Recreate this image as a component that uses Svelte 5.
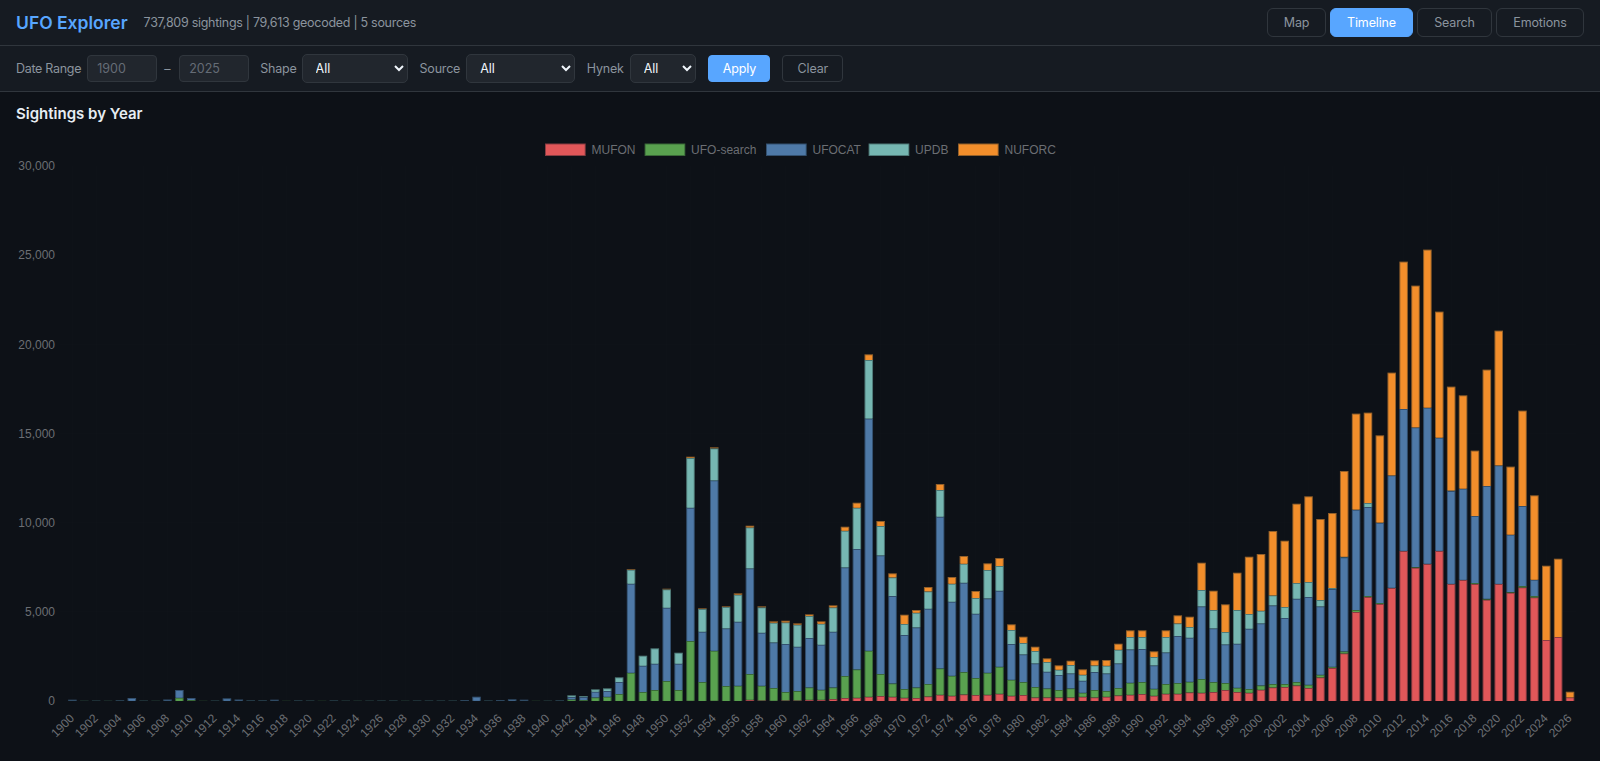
<script>
  const colors = ['#e15759', '#59a14f', '#4e79a7', '#76b7b2', '#f28e2b'];
  const edges = ['#8a3d42', '#3a6a38', '#33506f', '#4f7a78', '#93602a'];
  const names = ['MUFON', 'UFO-search', 'UFOCAT', 'UPDB', 'NUFORC'];
  const legendX = [545, 644.6, 766, 868.6, 958];

  const baseline = 701;
  const unit = 89.17;
  const firstX = 72.4;
  const step = 11.886;
  const barW = 8.56;

  // Cumulative stack tops per year, in chart pixels above the baseline: MUFON, UFO-search, UFOCAT, UPDB, NUFORC
  const s = (h) => [0, 0.2, h, h, h];
  const early = [1.3, 0.3, 0.5, 0.3, 0.8, 3, 0.5, 0.3, 1.5].map(s);
  const rows = [
    ...early,
    [0, 3.3, 11, 11, 11], [0, 1, 3, 3, 3],
    ...[0.1, 0.5, 2.7, 1.5, 0.7, 0.7, 1.3, 0.2, 0.6, 0.5, 0.2, 0.6, 0.4, 0.3, 0.4, 0.5, 0.5, 0.3, 0.5, 0.5, 0.5, 0.5, 1, 4.3, 0.6, 1, 1.7, 1.3, 0.2, 0.4, 0.7].map(s),
    [0, 1.7, 4, 5.7, 5.7], [0, 1, 4, 5, 5], [0, 3.7, 9.3, 11.7, 11.7], [0, 4.3, 10, 12.7, 12.7],
    [0, 7, 19, 23.7, 23.7], [0, 28.3, 117.3, 131.3, 132], [0, 9, 35.3, 45.3, 45.3], [0, 11, 37.3, 52.7, 52.7],
    [0, 20, 93.3, 111.7, 112.3], [0, 11, 37.3, 48.3, 48.3], [0.3, 60, 193.3, 243, 244.3], [0, 19, 69.3, 92, 92.7],
    [0.3, 50.3, 220.7, 252.7, 253.7], [0, 15, 72.7, 94, 94.7], [0, 15.3, 79.3, 106.3, 107.7], [1.3, 27, 132.7, 173.7, 175.3],
    [0.7, 15.3, 68.3, 93.7, 94.7], [0.3, 13, 58.7, 78.3, 79.7], [0.7, 9, 57, 78.7, 80.3], [0.7, 10, 54.3, 76.3, 77.7],
    [1.3, 13.7, 63, 85, 86.7], [1.3, 11.3, 56.3, 77.3, 79.7], [2, 13.7, 69.3, 93.7, 95.7], [3, 25, 133.7, 170.3, 174.3],
    [3.3, 31.7, 152, 193.3, 198.3], [4.3, 50.3, 282.5, 341, 346.7], [5, 27, 145.7, 175, 180], [4.3, 17.7, 105, 123.7, 127.7],
    [3.3, 12, 66, 77, 86.3], [3, 13.7, 73.7, 88.3, 91], [4.7, 17, 92.3, 109.7, 114], [6.3, 32.7, 184.3, 211, 217],
    [5.3, 25.3, 99.3, 117.3, 124], [6.7, 29, 118.3, 137.3, 145], [6, 23, 87.3, 103, 110], [6.3, 28.3, 102.7, 131, 137.7],
    [7.3, 34.3, 110.3, 135, 143], [5.3, 21.3, 57, 71, 76.7], [6, 19, 46.7, 58, 64.3], [3.7, 14, 37.7, 50, 54.3],
    [3.7, 12.7, 29.3, 39, 42.7], [3.7, 11, 26, 31.3, 35.7], [3.7, 12.7, 27.7, 36, 40.3], [4.3, 8.3, 20.3, 26.3, 31.7],
    [3.7, 11, 29, 35.7, 40.7], [4.3, 10, 27.7, 35.3, 41], [5.7, 13, 37.7, 51.3, 57.3], [6.3, 18.3, 51.7, 64, 70.7],
    [7, 19, 52, 64, 70.7], [5.3, 12.3, 35.7, 44, 49.7], [7.3, 17, 48.7, 64, 70.7], [7.3, 18, 65, 77.7, 85.7],
    [8.7, 19.3, 63.3, 74, 84.3], [8.3, 22, 94.7, 111, 138.3], [9, 19, 72.7, 91, 110.3], [11, 18, 56.7, 69, 96.7],
    [9, 13.3, 57.3, 91, 128.3], [8.3, 12, 72.3, 87, 144.3], [11.3, 15.7, 77.7, 90.3, 147], [13.7, 17, 95.7, 105.7, 170],
    [14, 17, 83, 94, 160.3], [15.7, 19, 102.3, 118, 197.3], [13, 16.3, 104, 119, 204.7], [23.7, 26.3, 94.7, 101, 182],
    [33, 34.3, 112, 113, 188], [47.7, 49.7, 143.7, 144.3, 230], [89, 91, 191.3, 191.5, 287.4], [104, 105, 194, 198, 288.4],
    [97, 98, 178.3, 178.5, 265.7], [113, 113.3, 225.7, 225.7, 328.4], [150, 150.2, 292, 292, 439.4], [133.3, 134, 273.7, 273.7, 415.4],
    [137, 137.3, 293.4, 293.4, 451.4], [150, 150.2, 263.4, 263.4, 389.4], [117, 117.2, 210, 210.6, 314.4], [121, 121.2, 212.4, 212.4, 305.7],
    [117, 118, 185, 185, 250.4], [101.3, 102.3, 215, 215, 331.4], [117, 117.2, 235.7, 235.7, 370.4], [108.3, 109, 166.4, 166.4, 234.4],
    [113.7, 115, 195, 195, 290.4], [103.7, 105, 121.3, 121.3, 205.7], [61, 61, 61, 61, 135.3], [64, 64, 64, 64, 142.3],
    [3.7, 3.7, 3.7, 3.7, 9.3]
  ];

  const segments = [];
  rows.forEach((tops, i) => {
    const x = firstX + step * i - barW / 2;
    let below = 0;
    tops.forEach((top, k) => {
      const h = top - below;
      if (h > 0.05) segments.push({ x, y: baseline - top, h, k, key: `${i}-${k}` });
      below = Math.max(below, top);
    });
  });

  const years = rows.map((_, i) => 1900 + i).filter((y) => y % 2 === 0);
  const yTicks = [0, 5000, 10000, 15000, 20000, 25000, 30000];
  const tickY = (v) => baseline - (v / 5000) * unit;
  const yearX = (y) => firstX + step * (y - 1900);
</script>

<div class="page">
  <header class="top">
    <h1>UFO Explorer</h1>
    <span class="stats">737,809 sightings | 79,613 geocoded | 5 sources</span>
    <nav>
      <button>Map</button>
      <button class="on">Timeline</button>
      <button>Search</button>
      <button>Emotions</button>
    </nav>
  </header>

  <div class="filters">
    <span class="lbl date">Date Range</span>
    <input class="yr" placeholder="1900" />
    <span class="dash">–</span>
    <input class="yr" placeholder="2025" />
    <span class="lbl shape-lbl">Shape</span>
    <select class="shape"><option>All</option></select>
    <span class="lbl gap">Source</span>
    <select class="source"><option>All</option></select>
    <span class="lbl gap">Hynek</span>
    <select class="hynek"><option>All</option></select>
    <button class="apply">Apply</button>
    <button class="clear">Clear</button>
  </div>

  <main>
    <h2>Sightings by Year</h2>
    <svg class="chart" width="1600" height="636" viewBox="0 125 1600 636" role="img" aria-label="Sightings by year">
      {#each yTicks as v}
        <line class="grid" x1="60" x2="1576" y1={tickY(v)} y2={tickY(v)} />
        <text class="tick" x="55" y={tickY(v) + 4.2} text-anchor="end">{v.toLocaleString('en-US')}</text>
      {/each}
      {#each years as y}
        <line class="grid" x1={yearX(y)} x2={yearX(y)} y1={tickY(30000)} y2={baseline} />
        <text class="tick" text-anchor="end" transform={`translate(${yearX(y) + 2.5} 719) rotate(-45)`}>{y}</text>
      {/each}

      {#each segments as b (b.key)}
        <rect x={b.x} y={b.y} width={barW} height={b.h} fill={edges[b.k]} />
        {#if b.h > 1}
          <rect x={b.x + 1} y={b.y + 1} width={barW - 2} height={b.h - 1} fill={colors[b.k]} />
        {/if}
      {/each}

      {#each names as n, i}
        <rect x={legendX[i]} y="143.5" width="40.7" height="12.5" fill={edges[i]} />
        <rect x={legendX[i] + 1} y="144.5" width="38.7" height="10.5" fill={colors[i]} />
        <text class="legend" x={legendX[i] + 46.5} y="154">{n}</text>
      {/each}
    </svg>
  </main>
</div>

<style>
  :global(body) {
    margin: 0;
    background: #0d1117;
    overflow: hidden;
  }
  .page {
    height: 761px;
    display: flex;
    flex-direction: column;
    font-family: Inter, "Liberation Sans", sans-serif;
    color: #e6edf3;
    overflow: hidden;
  }
  .top {
    height: 46px;
    box-sizing: border-box;
    display: flex;
    align-items: center;
    padding: 0 16px;
    background: #161b22;
    border-bottom: 1px solid #30363d;
  }
  h1 {
    margin: 0;
    font-size: 17.5px;
    font-weight: 600;
    color: #58a6ff;
  }
  .stats {
    margin-left: 16px;
    font-size: 12.5px;
    letter-spacing: -0.28px;
    color: #8b949e;
  }
  nav {
    margin-left: auto;
    display: flex;
    gap: 4px;
    align-self: flex-start;
    margin-top: 8px;
  }
  button {
    font: inherit;
    font-size: 12.5px;
    letter-spacing: -0.15px;
    box-sizing: border-box;
    cursor: pointer;
  }
  nav button {
    height: 29px;
    padding: 0;
    border: 1px solid #30363d;
    border-radius: 6px;
    background: transparent;
    color: #8b949e;
  }
  nav button:nth-child(1) { width: 59px; }
  nav button:nth-child(2) { width: 83px; }
  nav button:nth-child(3) { width: 75px; }
  nav button:nth-child(4) { width: 88px; }
  nav button.on {
    background: #58a6ff;
    border-color: #58a6ff;
    color: #fff;
  }
  .filters {
    height: 46px;
    box-sizing: border-box;
    display: flex;
    align-items: center;
    padding: 0 16px;
    background: #161b22;
    border-bottom: 1px solid #30363d;
    font-size: 12.5px;
    letter-spacing: -0.2px;
  }
  .lbl {
    color: #8b949e;
    white-space: nowrap;
  }
  .date {
    letter-spacing: -0.3px;
  }
  .gap {
    margin-left: 12px;
  }
  .shape-lbl {
    margin-left: 11px;
  }
  .yr {
    width: 70px;
    height: 27px;
    box-sizing: border-box;
    margin-left: 6px;
    padding: 0 9px;
    background: #21262d;
    border: 1px solid #30363d;
    border-radius: 4px;
    font: inherit;
    color: #e6edf3;
  }
  .yr::placeholder {
    color: #656c76;
    opacity: 1;
  }
  .dash {
    margin-left: 7px;
    width: 9px;
    color: #8b949e;
  }
  .dash + .yr {
    margin-left: 6px;
  }
  select {
    height: 29px;
    box-sizing: border-box;
    margin-left: 6px;
    padding: 0 9px;
    background-color: #21262d;
    border: 1px solid #30363d;
    border-radius: 5px;
    font: inherit;
    color: #f0f6fc;
  }
  .shape { width: 106px; margin-left: 5px; }
  .source { width: 108.6px; }
  .hynek { width: 66.7px; }
  .apply,
  .clear {
    height: 27px;
    border-radius: 4px;
    padding: 0;
    margin-left: 12px;
  }
  .apply {
    width: 62px;
    background: #58a6ff;
    border: 1px solid #58a6ff;
    color: #fff;
  }
  .clear {
    width: 61px;
    background: transparent;
    border: 1px solid #30363d;
    color: #8b949e;
  }
  main {
    flex: 1;
    min-height: 0;
    background: #0d1117;
  }
  h2 {
    margin: 0;
    height: 20px;
    padding: 13px 16px 0;
    font-size: 15px;
    line-height: 18px;
    font-weight: 600;
    color: #e6edf3;
  }
  .chart {
    display: block;
  }
  .grid {
    stroke: rgba(255, 255, 255, 0.012);
    stroke-width: 1;
  }
  .tick,
  .legend {
    font-family: "Liberation Sans", Arial, sans-serif;
    font-size: 12px;
    fill: #6b6e73;
  }
</style>
